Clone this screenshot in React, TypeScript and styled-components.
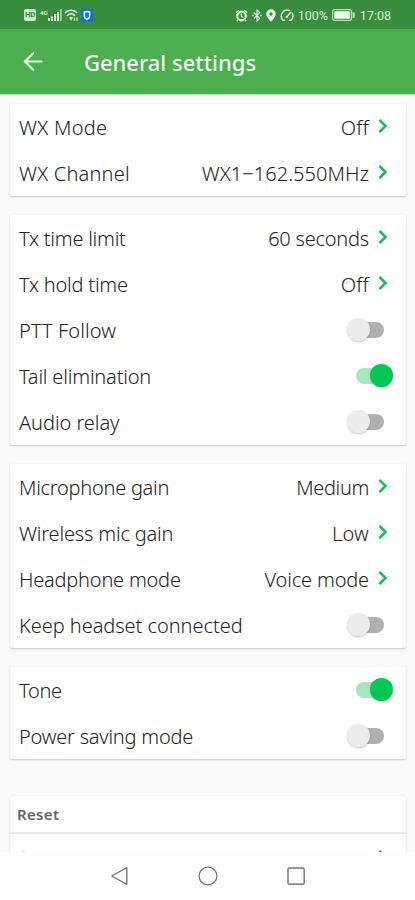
import React from "react";
import styled, { createGlobalStyle } from "styled-components";

const GlobalStyle = createGlobalStyle`
  * { box-sizing: border-box; }
  body { margin: 0; background: #fafafa; }
`;

const Screen = styled.div`
  width: 415px;
  height: 900px;
  overflow: hidden;
  display: flex;
  flex-direction: column;
  background: #fafafa;
  font-family: "Noto Sans", sans-serif;
  color: #222;
`;

const StatusBar = styled.div`
  height: 29px;
  flex: none;
  background: #388e3c;
  color: #dcefdc;
  display: flex;
  align-items: center;
  justify-content: space-between;
  padding: 1px 24px 0 24px;
  font: 400 12.5px Roboto, sans-serif;

  svg {
    display: block;
    flex: none;
  }
`;

const StatusGroup = styled.div<{ $gap: number }>`
  display: flex;
  align-items: center;
  gap: ${(p) => p.$gap}px;
`;

const StatusText = styled.span<{ $ml: number }>`
  margin-left: ${(p) => p.$ml}px;
  white-space: nowrap;
`;

const HdBadge = styled.span`
  width: 12px;
  height: 12px;
  border-radius: 2px;
  background: #cfe8cf;
  color: #388e3c;
  font-size: 8px;
  font-weight: 700;
  line-height: 12px;
  letter-spacing: -0.5px;
  text-align: center;
`;

const Signal = styled.span`
  display: flex;
  align-items: flex-start;
  margin-left: 2px;
`;

const NetworkType = styled.span`
  font-size: 6px;
  font-weight: 700;
  line-height: 7px;
`;

const AppBar = styled.header`
  height: 65px;
  flex: none;
  background: #4caf50;
  display: flex;
  align-items: center;
  padding: 1px 0 0 22px;
`;

const Title = styled.h1`
  margin: -1px 0 0 40px;
  font-size: 22px;
  font-weight: 500;
  color: #f2fbf2;
  line-height: 30px;
  letter-spacing: -0.02px;
`;

const Content = styled.main`
  flex: 1;
  min-height: 0;
  overflow: hidden;
  border-top: 1px solid #c4e8c6;
  padding: 9px 9px 0 10px;
  display: flex;
  flex-direction: column;
  gap: 19px;
`;

const Card = styled.section<{ $spaced?: boolean }>`
  flex: none;
  margin-top: ${(p) => (p.$spaced ? 18 : 0)}px;
  background: #fff;
  border-radius: 2px;
  box-shadow: 0 1px 2px rgba(0, 0, 0, 0.2), 0 0 1px rgba(0, 0, 0, 0.08);
`;

const Row = styled.div`
  height: 46px;
  display: flex;
  align-items: center;
  justify-content: space-between;
  padding: 0 18px 0 9px;
`;

const Text = styled.span<{ $ls?: number }>`
  margin-top: 1px;
  font-size: 20px;
  font-weight: 300;
  line-height: 28px;
  letter-spacing: ${(p) => p.$ls ?? 0}px;
  white-space: nowrap;
`;

const Value = styled.div`
  display: flex;
  align-items: center;
  gap: 9px;

  svg {
    margin-top: -2px;
  }
`;

const Switch = styled.span<{ $on: boolean }>`
  width: 47px;
  height: 24px;
  margin: -1px -5px 0 0;
  display: grid;
  align-items: center;
  justify-items: ${(p) => (p.$on ? "end" : "start")};
`;

const Track = styled.span<{ $on: boolean }>`
  grid-area: 1 / 1;
  width: 33px;
  height: 16px;
  border-radius: 8px;
  margin: ${(p) => (p.$on ? "0 4px 0 0" : "0 0 0 5px")};
  background: ${(p) => (p.$on ? "#a9e8bf" : "#b0b0b0")};
`;

const Thumb = styled.span<{ $on: boolean }>`
  grid-area: 1 / 1;
  width: 23px;
  height: 23px;
  margin-left: ${(p) => (p.$on ? 0 : 1)}px;
  border-radius: 50%;
  background: ${(p) => (p.$on ? "#03c853" : "#ececec")};
  box-shadow: 0 1px 2px rgba(0, 0, 0, 0.22);
`;

const CardTitle = styled.h2`
  margin: 0;
  height: 38px;
  border-bottom: 2px solid #e8e8e8;
  padding-left: 7px;
  font-size: 15px;
  font-weight: 600;
  line-height: 37px;
  letter-spacing: 0.35px;
  color: #666;
`;

const NavBar = styled.nav`
  height: 48px;
  flex: none;
  background: #fdfdfd;
  display: flex;
  justify-content: center;
  align-items: center;
  gap: 68px;
`;

function Chevron() {
  return (
    <svg width="10" height="16" viewBox="0 0 10 16" fill="none" stroke="#10c050" strokeWidth="2.5">
      <path d="M1.4 1.8 7.6 8l-6.2 6.2" />
    </svg>
  );
}

function BackArrow() {
  return (
    <svg width="22" height="22" viewBox="0 0 22 22" fill="none" stroke="#f2fbf2" strokeWidth="2.1" strokeLinecap="round">
      <path d="M19.5 10.5H3M11.2 2.3 3 10.5l8.2 8.2" />
    </svg>
  );
}

function SignalIcon() {
  return (
    <svg width="14" height="12" viewBox="0 0 14 12" fill="currentColor">
      <path d="M0 9h2v3H0zM3 7.5h2V12H3zM6 5h2v7H6zM9 3h2v9H9z" />
      <path d="M12 0h1.8v12H12z" opacity=".65" />
    </svg>
  );
}

function WifiIcon() {
  return (
    <svg width="15" height="13" viewBox="0 0 15 13" fill="none" stroke="currentColor" strokeWidth="1.5">
      <path d="M.8 4.1c3.500-3.800 9-3.800 12.500 0M3 6.700c2.400-2.500 5.700-2.500 8.100 0" />
      <path d="M5 8.800c1.300-1.300 2.900-1.300 4.100 0L7 11.500z" fill="currentColor" stroke="none" />
      <path d="M10.500 8.500v3.500M13 8.500v3.500" strokeWidth="1.2" />
    </svg>
  );
}

function ShieldIcon() {
  return (
    <svg width="12" height="13" viewBox="0 0 12 13">
      <rect width="12" height="13" rx="2" fill="#1769e0" />
      <path d="M3.300 3.200 6 2.500l2.700.7v3.600c0 1.800-1.100 2.900-2.700 3.700-1.600-.8-2.700-1.900-2.700-3.700z" fill="none" stroke="#e4f2ff" strokeWidth="1.7" />
    </svg>
  );
}

function AlarmIcon() {
  return (
    <svg width="13" height="13" viewBox="0 0 13 13" fill="currentColor">
      <path d="M.6 3 3.300.8l1 1L1.400 4.200zM12.400 3 9.700.8l-1 1 2.900 2.400z" />
      <circle cx="6.5" cy="7" r="4.3" fill="none" stroke="currentColor" strokeWidth="2.2" />
      <path d="M6.300 4.600v2.700l2 1.200M3 10.500l-1.200 1.700M10 10.500l1.200 1.700" fill="none" stroke="currentColor" strokeWidth="1.2" />
    </svg>
  );
}

function BluetoothIcon() {
  return (
    <svg width="10" height="13" viewBox="0 0 10 13" fill="none" stroke="currentColor" strokeWidth="1.2">
      <path d="m1.800 3.500 6 5.800L5 12V1l2.800 2.700-6 5.800" />
      <path d="M.3 6.500h1.300M8.300 6.500h1.300" strokeWidth="1.4" />
    </svg>
  );
}

function PinIcon() {
  return (
    <svg width="10" height="13" viewBox="0 0 10 13" fill="#f2fbf2" fillRule="evenodd">
      <path d="M5 .3a4.700 4.700 0 0 1 4.700 4.700C9.700 8.300 5 12.700 5 12.700S.3 8.300.3 5A4.700 4.700 0 0 1 5 .3zm0 3a1.700 1.700 0 1 0 0 3.400 1.700 1.700 0 0 0 0-3.400z" />
    </svg>
  );
}

function GaugeIcon() {
  return (
    <svg width="14" height="13" viewBox="0 0 14 13" fill="none" stroke="currentColor" strokeWidth="1.5" strokeLinecap="round">
      <path d="M9.300 1.500A6 6 0 0 0 3 11.300h1.500M12.200 4.200A6 6 0 0 1 11 11.300H9.500M6.800 8 10.500 3.500" />
      <circle cx="6.7" cy="8" r="1" fill="currentColor" stroke="none" />
    </svg>
  );
}

function BatteryIcon() {
  return (
    <svg width="23" height="12" viewBox="0 0 23 12">
      <rect x=".6" y=".6" width="18.8" height="10.8" rx="2" fill="none" stroke="#b9dcb9" strokeWidth="1.2" />
      <rect x="2.2" y="2.2" width="15.6" height="7.6" rx=".6" fill="#eef8ee" />
      <path d="M20.500 3h.8a1.500 1.500 0 0 1 1.500 1.500v3A1.500 1.500 0 0 1 21.300 9h-.8z" fill="#b9dcb9" />
    </svg>
  );
}

type Item = { label: string; ls?: number; value?: string; valueLs?: number; on?: boolean };

const groups: Item[][] = [
  [
    { label: "WX Mode", ls: 0.28, value: "Off", valueLs: 0.2 },
    { label: "WX Channel", ls: 0.2, value: "WX1−162.550MHz", valueLs: 0.07 },
  ],
  [
    { label: "Tx time limit", ls: -0.24, value: "60 seconds", valueLs: -0.22 },
    { label: "Tx hold time", ls: -0.22, value: "Off", valueLs: 0.2 },
    { label: "PTT Follow", ls: 0.1, on: false },
    { label: "Tail elimination", ls: -0.18, on: true },
    { label: "Audio relay", ls: -0.05, on: false },
  ],
  [
    { label: "Microphone gain", ls: -0.26, value: "Medium", valueLs: -0.35 },
    { label: "Wireless mic gain", ls: -0.18, value: "Low", valueLs: 0.2 },
    { label: "Headphone mode", ls: -0.22, value: "Voice mode", valueLs: -0.17 },
    { label: "Keep headset connected", ls: -0.05, on: false },
  ],
  [
    { label: "Tone", ls: -0.3, on: true },
    { label: "Power saving mode", ls: -0.23, on: false },
  ],
];

function SettingRow({ item }: { item: Item }) {
  return (
    <Row>
      <Text $ls={item.ls}>{item.label}</Text>
      {item.value !== undefined ? (
        <Value>
          <Text $ls={item.valueLs}>{item.value}</Text>
          <Chevron />
        </Value>
      ) : (
        <Switch $on={!!item.on}>
          <Track $on={!!item.on} />
          <Thumb $on={!!item.on} />
        </Switch>
      )}
    </Row>
  );
}

const ResetRow = styled(Row)`
  align-items: flex-start;
  padding-top: 15px;
`;

export default function App() {
  return (
    <Screen>
      <GlobalStyle />
      <StatusBar>
        <StatusGroup $gap={2}>
          <HdBadge>HD</HdBadge>
          <Signal>
            <NetworkType>4G</NetworkType>
            <SignalIcon />
          </Signal>
          <WifiIcon />
          <ShieldIcon />
        </StatusGroup>
        <StatusGroup $gap={4}>
          <StatusGroup $gap={4}>
            <AlarmIcon />
            <BluetoothIcon />
            <PinIcon />
          </StatusGroup>
          <GaugeIcon />
          <StatusText $ml={0}>100%</StatusText>
          <BatteryIcon />
          <StatusText $ml={1}>17:08</StatusText>
        </StatusGroup>
      </StatusBar>
      <AppBar>
        <BackArrow />
        <Title>General settings</Title>
      </AppBar>
      <Content>
        {groups.map((group, i) => (
          <Card key={i}>
            {group.map((item) => (
              <SettingRow key={item.label} item={item} />
            ))}
          </Card>
        ))}
        <Card $spaced>
          <CardTitle>Reset</CardTitle>
          <ResetRow>
            <svg width="10" height="16" viewBox="0 0 10 16" fill="none" stroke="#999" strokeWidth="1.3">
              <path d="M1 5.500c1-3.200 5.500-3.200 6.500 0" />
            </svg>
            <Chevron />
          </ResetRow>
        </Card>
      </Content>
      <NavBar>
        <svg width="20" height="20" viewBox="0 0 20 20" fill="none" stroke="#777" strokeWidth="1.4" strokeLinejoin="round">
          <path d="M16.800 1.700v16.600L1.800 10z" />
        </svg>
        <svg width="20" height="20" viewBox="0 0 20 20" fill="none" stroke="#777" strokeWidth="1.3">
          <circle cx="10" cy="10" r="8.9" />
        </svg>
        <svg width="20" height="20" viewBox="0 0 20 20" fill="none" stroke="#777" strokeWidth="1.4">
          <rect x="2" y="2" width="16.2" height="16.2" rx="1.5" />
        </svg>
      </NavBar>
    </Screen>
  );
}
